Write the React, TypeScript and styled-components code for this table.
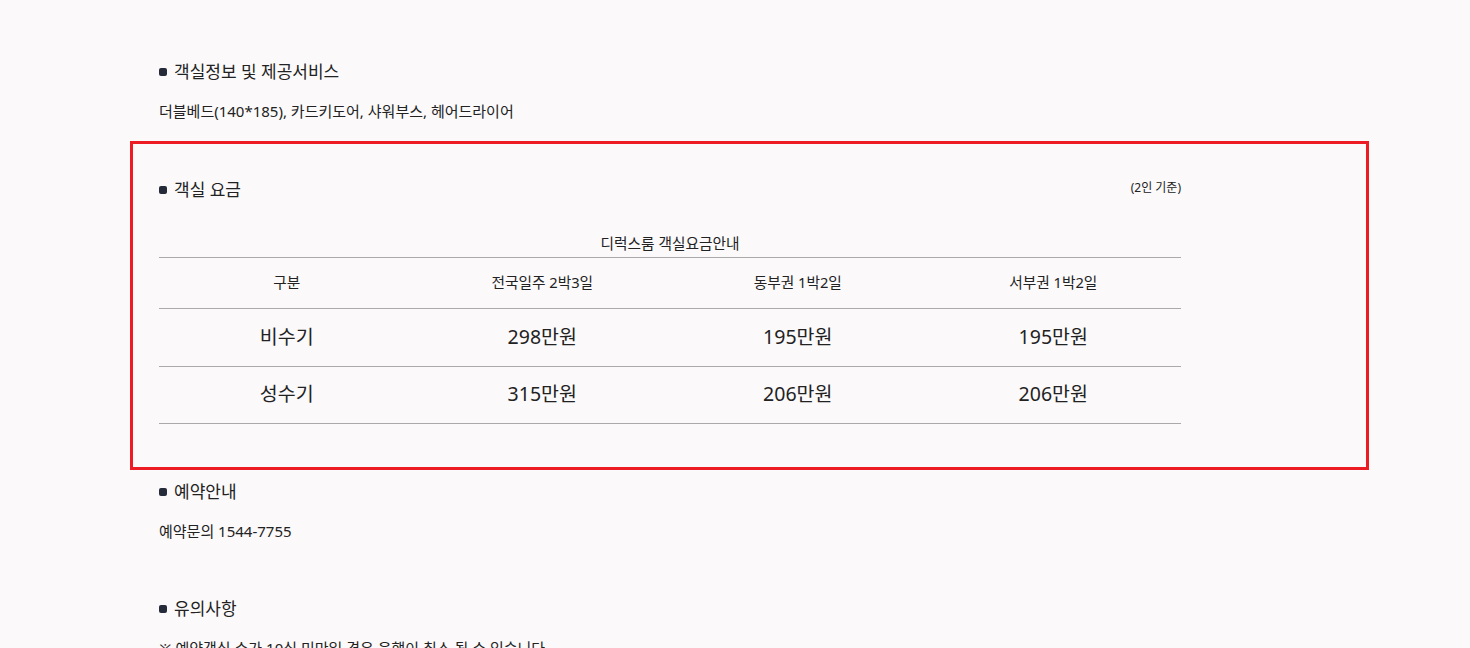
import React from "react";
import styled, { createGlobalStyle } from "styled-components";

const Global = createGlobalStyle`
  html, body { margin: 0; padding: 0; background: #fbf9fa; }
  body { font-family: "Noto Sans", "Noto Sans CJK KR", sans-serif; color: #222; }
`;

const Page = styled.div`
  padding: 60px 0 0 159px;
  width: 1022px;
`;

const Section = styled.section<{ $top?: number; $gap?: number }>`
  margin-top: ${(p) => p.$top ?? 0}px;
  margin-bottom: ${(p) => p.$gap ?? 0}px;
`;

const Title = styled.h3`
  display: flex;
  align-items: center;
  gap: 7px;
  margin: 0;
  font-size: 17px;
  font-weight: 400;
  line-height: 24px;
  color: #222;
  &::before {
    content: "";
    width: 8px;
    height: 8px;
    border-radius: 2px;
    background: #252b38;
  }
`;

const Body = styled.p`
  margin: 17px 0 0;
  font-size: 15px;
  line-height: 20px;
  color: #222;
`;

const Highlight = styled.div`
  margin: 20px 0 0 -29px;
  width: 1239px;
  box-sizing: border-box;
  border: 3px solid #ed1c24;
  padding: 34px 0 43px 26px;
`;

const Inner = styled.div`
  width: 1022px;
`;

const TitleRow = styled.div`
  display: flex;
  justify-content: space-between;
  align-items: flex-start;
`;

const Note = styled.span`
  font-size: 12px;
  line-height: 16px;
  margin-top: 2px;
  color: #222;
`;

const Table = styled.table`
  width: 100%;
  margin-top: 30px;
  border-collapse: collapse;
  table-layout: fixed;
  caption {
    font-size: 14.7px;
    line-height: 22px;
    padding-bottom: 3px;
    color: #222;
  }
`;

const Th = styled.th`
  font-size: 14.7px;
  font-weight: 400;
  height: 47px;
  padding: 0 0 3px;
  border-top: 1px solid #aaa;
  border-bottom: 1px solid #aaa;
  color: #222;
`;

const Td = styled.td`
  font-size: 19.5px;
  text-align: center;
  height: 52.5px;
  padding: 0 0 4px;
  border-bottom: 1px solid #aaa;
  color: #222;
`;

const rows = [
  ["비수기", "298만원", "195만원", "195만원"],
  ["성수기", "315만원", "206만원", "206만원"],
];

export default function App() {
  return (
    <>
      <Global />
      <Page>
        <Section>
          <Title>객실정보 및 제공서비스</Title>
          <Body>더블베드(140*185), 카드키도어, 샤워부스, 헤어드라이어</Body>
        </Section>
        <Highlight>
          <Inner>
            <TitleRow>
              <Title>객실 요금</Title>
              <Note>(2인 기준)</Note>
            </TitleRow>
            <Table>
              <caption>디럭스룸 객실요금안내</caption>
              <thead>
                <tr>
                  <Th>구분</Th>
                  <Th>전국일주 2박3일</Th>
                  <Th>동부권 1박2일</Th>
                  <Th>서부권 1박2일</Th>
                </tr>
              </thead>
              <tbody>
                {rows.map((r) => (
                  <tr key={r[0]}>
                    {r.map((c, i) => (
                      <Td key={i}>{c}</Td>
                    ))}
                  </tr>
                ))}
              </tbody>
            </Table>
          </Inner>
        </Highlight>
        <Section $top={10} $gap={56}>
          <Title>예약안내</Title>
          <Body>예약문의 1544-7755</Body>
        </Section>
        <Section>
          <Title>유의사항</Title>
          <Body>※ 예약객실 수가 10실 미만일 경우 운행이 취소 될 수 있습니다.</Body>
        </Section>
      </Page>
    </>
  );
}
